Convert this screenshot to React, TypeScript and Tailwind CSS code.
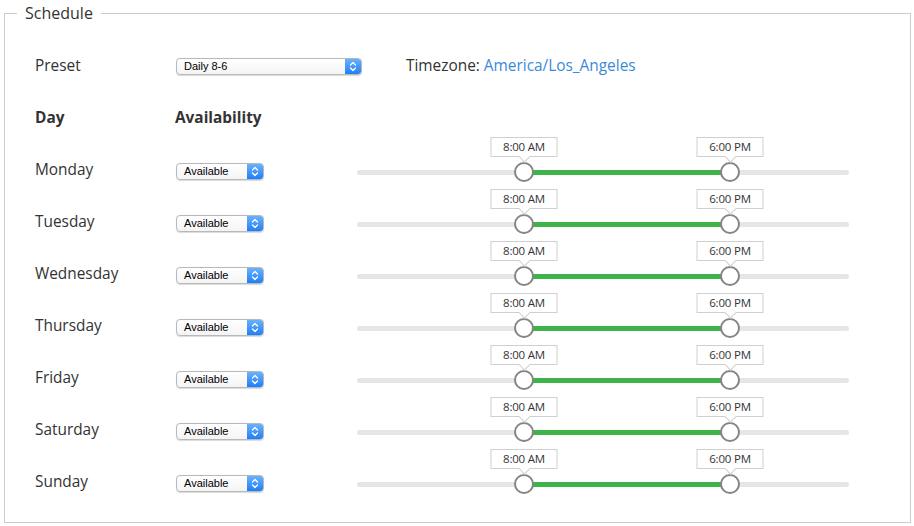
const days = ['Monday', 'Tuesday', 'Wednesday', 'Thursday', 'Friday', 'Saturday', 'Sunday']

function Stepper() {
  return (
    <svg width="8" height="11" viewBox="0 0 8 11" fill="none">
      <path d="M1.5 4 L4 1.5 L6.5 4" stroke="white" strokeWidth="1.3" strokeLinecap="round" strokeLinejoin="round" />
      <path d="M1.5 7 L4 9.5 L6.5 7" stroke="white" strokeWidth="1.3" strokeLinecap="round" strokeLinejoin="round" />
    </svg>
  )
}

function MacSelect({ value, width }: { value: string; width: string }) {
  return (
    <div
      className={`${width} flex h-[17px] items-stretch overflow-hidden rounded-[4px] border border-[#b9b9b9] bg-gradient-to-b from-white to-[#f4f4f4] shadow-[0_0.5px_1px_rgba(0,0,0,0.15)]`}
    >
      <span className="flex-1 truncate pl-[7px] text-[11px] leading-[15px] text-black [font-family:'Liberation_Sans',Arial,sans-serif]">
        {value}
      </span>
      <span className="flex w-[16px] items-center justify-center bg-gradient-to-b from-[#69b1fa] to-[#1b7ff9]">
        <Stepper />
      </span>
    </div>
  )
}

function Tip({ label, left }: { label: string; left: string }) {
  return (
    <div className={`absolute top-[-8px] ${left} flex h-[20px] w-[67px] -translate-x-1/2 items-center justify-center border border-[#cfcfcf] bg-white text-[11.5px] tracking-[-0.2px] text-[#333]`}>
      {label}
      <span className="absolute bottom-[-5px] left-1/2 h-[8px] w-[8px] -translate-x-1/2 rotate-45 border-b border-r border-[#cfcfcf] bg-white" />
    </div>
  )
}

function RangeSlider() {
  return (
    <div className="relative h-[52px] w-[492px]">
      <div className="absolute left-0 right-0 top-[25px] h-[5px] rounded-full bg-[#e6e6e6]" />
      <div className="absolute left-[166px] top-[25px] h-[5px] w-[207px] bg-[#3db34a]" />
      <div className="absolute left-[157px] top-[17px] h-[20px] w-[20px] rounded-full border-2 border-[#858585] bg-white" />
      <div className="absolute left-[363px] top-[17px] h-[20px] w-[20px] rounded-full border-2 border-[#858585] bg-white" />
      <Tip label="8:00 AM" left="left-[167px]" />
      <Tip label="6:00 PM" left="left-[373px]" />
    </div>
  )
}

export default function App() {
  return (
    <div className="w-[914px] bg-white text-[15.4px] text-[#333] [font-family:'Open_Sans',Arial,sans-serif]">
      <fieldset className="mx-[4px] w-[907px] border border-[#cccccc] pb-[13px]">
        <legend className="ml-[12px] px-[8px] text-[16px] leading-[26px]">Schedule</legend>

        <div className="mt-[14px] flex h-[52px] items-center">
          <span className="w-[171px] pl-[30px]">Preset</span>
          <MacSelect value="Daily 8-6" width="w-[186px]" />
          <span className="ml-[44px]">
            Timezone: <span className="text-[#3b8ad8]">America/Los_Angeles</span>
          </span>
        </div>

        <div className="flex h-[53px] items-center pb-[1px] font-bold">
          <span className="w-[170px] pl-[30px]">Day</span>
          <span>Availability</span>
        </div>

        {days.map((d) => (
          <div key={d} className="flex h-[52px] items-center">
            <span className="w-[171px] pl-[30px] pb-[3px]">{d}</span>
            <MacSelect value="Available" width="w-[88px]" />
            <div className="ml-[93px]">
              <RangeSlider />
            </div>
          </div>
        ))}
      </fieldset>
    </div>
  )
}
